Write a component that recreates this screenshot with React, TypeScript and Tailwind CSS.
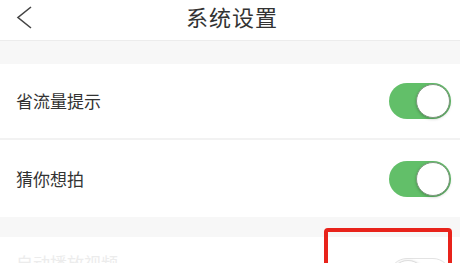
import React from "react"

function Toggle({ on }: { on: boolean }) {
  return (
    <div
      className={
        "relative w-[62px] h-[36px] rounded-full " +
        (on ? "bg-[#62bf69]" : "bg-white border border-[#e3e3e3]")
      }
    >
      <div
        className={
          "absolute top-[1px] w-[34px] h-[34px] rounded-full bg-white border shadow-[0_1px_3px_rgba(0,0,0,0.25)] " +
          (on ? "right-[1px] border-[#7f9a80]" : "left-[1px] border-[#dedede]")
        }
      />
    </div>
  )
}

function Row({ label, on, h }: { label: string; on: boolean; h: string }) {
  return (
    <div className={"flex items-center justify-between bg-white pl-4 pr-[9px] " + h}>
      <span className="text-[17px] text-[#333]">{label}</span>
      <Toggle on={on} />
    </div>
  )
}

export default function App() {
  return (
    <div
      className="relative w-[460px] h-[263px] overflow-hidden bg-[#f7f7f7]"
      style={{ fontFamily: '"Noto Sans CJK SC", "Noto Sans", sans-serif' }}
    >
      {/* header */}
      <div className="relative flex items-center justify-center h-[41px] bg-white border-b border-[#ececec]">
        <svg className="absolute left-0 top-0" width="40" height="36" viewBox="0 0 40 36">
          <polyline points="31,7 18,17.5 31,28" fill="none" stroke="#444" strokeWidth="1.6" />
        </svg>
        <span className="text-[22px] text-[#333] tracking-[1px] ml-1 -mt-[7px]">系统设置</span>
      </div>

      <div className="h-[23px]" />

      <Row label="省流量提示" on h="h-[74px]" />
      <div className="h-[2px] bg-[#f2f2f2]" />
      <Row label="猜你想拍" on h="h-[77px]" />

      <div className="h-[20px]" />

      {/* faded row */}
      <div className="flex justify-between bg-white pl-4 pr-[9px] h-[77px] pt-[14px]">
        <span className="text-[17px] text-[#ececec] leading-6">自动播放视频</span>
        <div className="pt-[7px]">
          <Toggle on={false} />
        </div>
      </div>

      {/* annotation box */}
      <div className="absolute left-[324px] top-[228px] w-[128px] h-[60px] border-[4px] border-[#e8231b] rounded-[4px]" />
    </div>
  )
}
